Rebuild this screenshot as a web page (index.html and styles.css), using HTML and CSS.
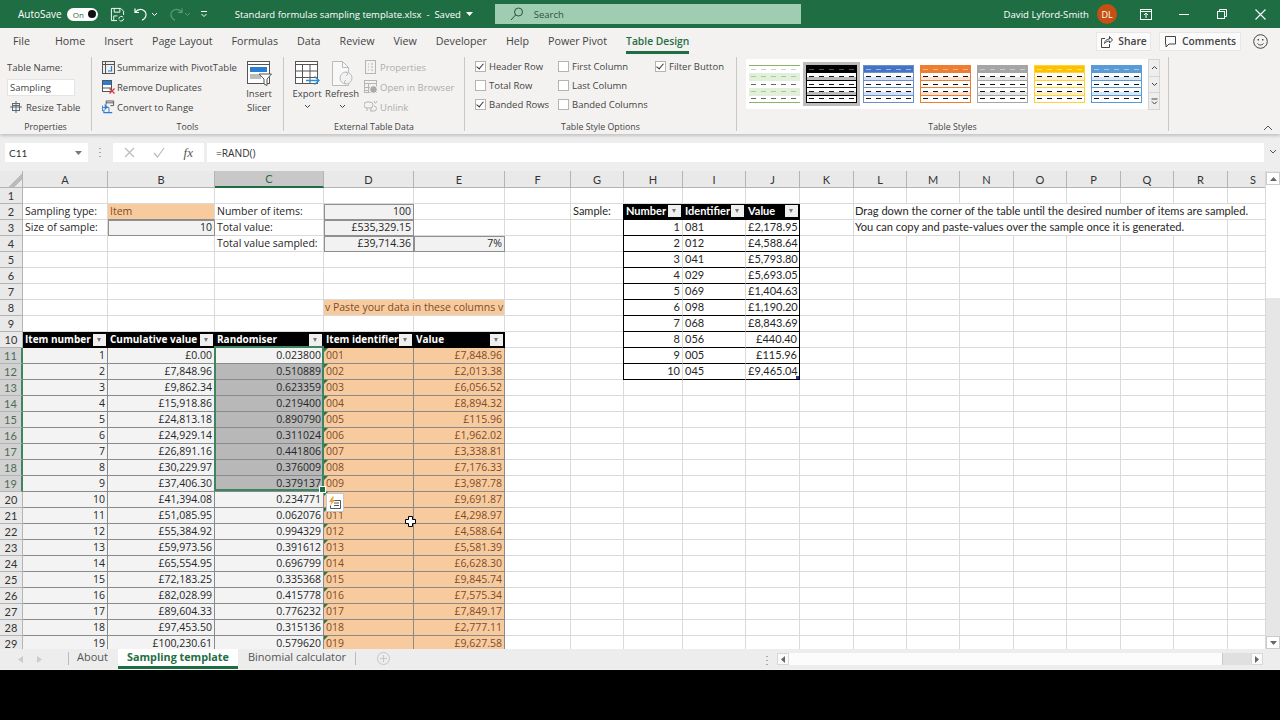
FILE: index.html
```html
<!DOCTYPE html>
<html lang="en">
<head>
  <meta charset="UTF-8" />
  <title>Standard formulas sampling template.xlsx - Excel</title>
  <link rel="stylesheet" href="styles.css">
</head>
<body>
<div class="app">

  <!-- title bar -->
  <header class="titlebar">
    <span class="autosave">AutoSave</span>
    <span class="toggle">On<i></i></span>
    <svg class="qa save" width="15" height="15" viewBox="0 0 16 16" fill="none" stroke="#fff" stroke-width="1"><path d="M1.500 1.500h10l3 3v4M1.500 1.500v13h6M4.500 1.500v4h6v-4M4 14.500v-5h4"/><path d="M9.500 12.500a2.500 2.500 0 0 1 4.500-1.500M14.500 12.500a2.500 2.500 0 0 1-4.500 1.500"/></svg>
    <svg class="qa undo" width="14" height="14" viewBox="0 0 14 14" fill="none" stroke="#fff" stroke-width="1.200"><path d="M1 1.500v4h4M1.200 5.300C3 3 5 2 7.500 2.500c3 .6 5 3.200 4.500 6-.3 1.800-2 3.800-4 4.800"/></svg>
    <svg class="chev c-undo" width="7" height="5" viewBox="0 0 7 5" fill="none" stroke="#fff"><path d="M1 1l2.500 2.500L6 1"/></svg>
    <svg class="qa redo" width="14" height="14" viewBox="0 0 14 14" fill="none" stroke="#5f9b7b" stroke-width="1.200"><path d="M13 1.500v4H9M12.800 5.300C11 3 9 2 6.500 2.500c-3 .6-5 3.200-4.500 6 .3 1.800 2 3.800 4 4.800"/></svg>
    <svg class="chev c-redo" width="7" height="5" viewBox="0 0 7 5" fill="none" stroke="#5f9b7b"><path d="M1 1l2.500 2.500L6 1"/></svg>
    <svg class="custom" width="8" height="8" viewBox="0 0 8 8" fill="none" stroke="#fff"><path d="M1 1.500h6M1.500 4l2.500 2.500L6.500 4"/></svg>
    <span class="doc">Standard formulas sampling template.xlsx&nbsp; - &nbsp;Saved</span>
    <svg class="chev doc-chev" width="7" height="4" viewBox="0 0 7 4"><path d="M0 0h7L3.500 4z" fill="#fff"/></svg>
    <div class="search">
      <svg width="14" height="14" viewBox="0 0 14 14" fill="none" stroke="#2f4f3e" stroke-width="1"><circle cx="8.500" cy="5" r="4"/><path d="M5.500 8L1 13"/></svg>
      <span>Search</span>
    </div>
    <span class="user">David Lyford-Smith</span>
    <span class="avatar">DL</span>
    <svg class="win w1" width="12" height="11" viewBox="0 0 12 11" fill="none" stroke="#fff"><rect x=".5" y=".5" width="11" height="10"/><path d="M.5 2.500h11"/><path d="M6 9V4M4 6l2-2 2 2"/></svg>
    <svg class="win w2" width="10" height="10" viewBox="0 0 10 10" stroke="#fff"><path d="M0 5.500h10"/></svg>
    <svg class="win w3" width="10" height="10" viewBox="0 0 10 10" fill="none" stroke="#fff"><path d="M2.500 2.500V.5h7v7h-2"/><rect x=".5" y="2.500" width="7" height="7"/></svg>
    <svg class="win w4" width="11" height="11" viewBox="0 0 11 11" stroke="#fff" stroke-width="1.100"><path d="M.5.500l10 10M10.500.500l-10 10"/></svg>
  </header>

  <!-- ribbon tabs -->
  <nav class="tabs">
    <span class="tab file">File</span>
    <span class="tab">Home</span>
    <span class="tab">Insert</span>
    <span class="tab">Page Layout</span>
    <span class="tab">Formulas</span>
    <span class="tab">Data</span>
    <span class="tab">Review</span>
    <span class="tab">View</span>
    <span class="tab">Developer</span>
    <span class="tab">Help</span>
    <span class="tab">Power Pivot</span>
    <span class="tab active">Table Design</span>
    <span class="tab-btn share">
      <svg width="13" height="13" viewBox="0 0 13 13" fill="none" stroke="#444"><path d="M5 3.500H1.500v9h8V9"/><path d="M4.500 8.500c.3-3 2.500-4.500 5-4.500V1.500l3 3.500-3 3V6c-2 0-3.500.800-5 2.500z"/></svg>
      Share
    </span>
    <span class="tab-btn comments">
      <svg width="13" height="13" viewBox="0 0 13 13" fill="none" stroke="#444"><path d="M1.500 1.500h10v7.500h-6.500l-3 3v-3h-.5z"/></svg>
      Comments
    </span>
    <svg class="smiley" width="15" height="15" viewBox="0 0 15 15" fill="none" stroke="#444"><circle cx="7.500" cy="7.500" r="6.800"/><path d="M4.500 9.500c1.500 2 4.500 2 6 0"/><path d="M5.300 5v1.500M9.700 5v1.500" stroke-width="1.400"/></svg>
  </nav>

  <!-- ribbon -->
  <section class="ribbon">
    <div class="group g-props">
      <div class="body stack indent">
        <div class="line">Table Name:</div>
        <div class="line"><span class="tname">Sampling</span></div>
        <div class="line resize">
          <svg width="12" height="12" viewBox="0 0 12 12" fill="none" stroke="#5a6a72"><rect x="2.500" y="2.500" width="7" height="7"/><path d="M6 0v12M0 6h12M2.500 4.500h7"/></svg>
          Resize Table
        </div>
      </div>
      <div class="label">Properties</div>
    </div>

    <div class="group g-tools">
      <div class="body row">
        <div class="stack">
          <div class="line ico">
            <svg width="13" height="13" viewBox="0 0 13 13" fill="none"><rect x=".5" y=".5" width="12" height="12" fill="#eee" stroke="#555"/><path d="M.5 3.500h12M3.500.5v12" stroke="#555"/><path d="M9.500 5v5H6" stroke="#2b7cd3" stroke-width="1.200"/></svg>
            Summarize with PivotTable
          </div>
          <div class="line ico">
            <svg width="13" height="14" viewBox="0 0 13 14" fill="none"><rect x=".5" y=".5" width="9" height="11" fill="#fff" stroke="#555"/><rect x="1" y="1" width="8" height="4" fill="#2b7cd3"/><path d="M.5 8h9" stroke="#555"/><path d="M7.500 8.500l5 5M12.500 8.500l-5 5" stroke="#d9363e" stroke-width="1.300"/></svg>
            Remove Duplicates
          </div>
          <div class="line ico">
            <svg width="14" height="14" viewBox="0 0 14 14" fill="none"><path d="M4.500 4.500v-4h8v5H9" stroke="#555"/><path d="M4.500 2.500h8" stroke="#555"/><path d="M.5 7.500h7v5" stroke="#2b7cd3"/><path d="M5.500 7l-2-2v4zM2 10v3h9" stroke="#2b7cd3" stroke-width="1.200"/><path d="M.5 5.500v6" stroke="#2b7cd3"/></svg>
            Convert to Range
          </div>
        </div>
        <div class="big slicer">
          <svg width="25" height="25" viewBox="0 0 25 25" fill="none"><rect x=".5" y=".5" width="22" height="22" fill="#fff" stroke="#555"/><path d="M.5 3.500h22" stroke="#555"/><rect x="3" y="6" width="17" height="5" fill="#2b7cd3"/><rect x="3" y="13" width="11" height="5" fill="#bbb"/><path d="M12 13h12.500l-4.500 5v6.500l-3-1.500v-5z" fill="#fff" stroke="#555"/></svg>
          <span>Insert<br>Slicer</span>
        </div>
      </div>
      <div class="label">Tools</div>
    </div>

    <div class="group g-ext">
      <div class="body row">
        <div class="big export">
          <svg width="25" height="25" viewBox="0 0 25 25" fill="none" stroke="#555"><rect x=".5" y=".5" width="22" height="22" fill="#fff"/><path d="M.5 3.500h22M.5 10h22M.5 16.500h22M7.500 3.500v19M15 3.500v19"/><path d="M11 19.500h13M19.500 15.500l4.500 4-4.500 4" stroke="#2b8fd3" stroke-width="1.300"/></svg>
          <span>Export</span>
          <svg class="mini" width="7" height="5" viewBox="0 0 7 5" fill="none" stroke="#444"><path d="M1 1l2.500 2.500L6 1"/></svg>
        </div>
        <div class="big refresh">
          <svg width="23" height="25" viewBox="0 0 23 25" fill="none" stroke="#bbb"><path d="M1.500.5h10l6 6v18h-16z" fill="#f8f8f8"/><path d="M11.500.5v6h6"/><circle cx="15" cy="17" r="6" fill="#f3f2f1"/><path d="M15 11l2 2-2 2M15 23l-2-2 2-2"/></svg>
          <span>Refresh</span>
          <svg class="mini" width="7" height="5" viewBox="0 0 7 5" fill="none" stroke="#444"><path d="M1 1l2.500 2.500L6 1"/></svg>
        </div>
        <div class="stack off">
          <div class="line ico">
            <svg width="14" height="14" viewBox="0 0 12 14" fill="none" stroke="#b5b5b5"><rect x=".5" y=".5" width="10" height="13"/><path d="M3 4h1M3 7h1M3 10h1M6 4h2M6 7h2M6 10h2"/></svg>
            Properties
          </div>
          <div class="line ico">
            <svg width="14" height="14" viewBox="0 0 14 14" fill="none" stroke="#b5b5b5"><rect x=".5" y=".5" width="12" height="12"/><path d="M.5 3.500h12M4.500 3.500v9M.5 7.500h6M.5 10.500h4"/><circle cx="9.500" cy="9.500" r="3.800" fill="#aaa" stroke="#f3f2f1"/></svg>
            Open in Browser
          </div>
          <div class="line ico">
            <svg width="14" height="14" viewBox="0 0 14 14" fill="none" stroke="#b5b5b5"><path d="M3 11V8M7 11V8"/><path d="M4 8H3a3 3 0 0 1 0-6h3a3 3 0 0 1 3 3 3 3 0 0 1-3 3z"/><path d="M10 6a2.500 2.500 0 0 1 0 5H6M10 1l1 2M13 1l-1.500 2.500"/></svg>
            Unlink
          </div>
        </div>
      </div>
      <div class="label">External Table Data</div>
    </div>

    <div class="group g-opts">
      <div class="body row">
        <div class="opt-col c1">
          <div class="opt"><i class="box on"></i>Header Row</div>
          <div class="opt"><i class="box"></i>Total Row</div>
          <div class="opt"><i class="box on"></i>Banded Rows</div>
        </div>
        <div class="opt-col c2">
          <div class="opt"><i class="box"></i>First Column</div>
          <div class="opt"><i class="box"></i>Last Column</div>
          <div class="opt"><i class="box"></i>Banded Columns</div>
        </div>
        <div class="opt-col c3">
          <div class="opt"><i class="box on"></i>Filter Button</div>
        </div>
      </div>
      <div class="label">Table Style Options</div>
    </div>

    <div class="group g-styles">
      <div class="body row">
        <div class="gallery">
          <div class="thumb green"><i></i><i></i><i></i><i></i><i></i></div>
          <div class="frame"><div class="thumb black"><i></i><i></i><i></i><i></i><i></i></div></div>
          <div class="thumb blue"><i></i><i></i><i></i><i></i><i></i></div>
          <div class="thumb orange"><i></i><i></i><i></i><i></i><i></i></div>
          <div class="thumb grey"><i></i><i></i><i></i><i></i><i></i></div>
          <div class="thumb gold"><i></i><i></i><i></i><i></i><i></i></div>
          <div class="thumb sky"><i></i><i></i><i></i><i></i><i></i></div>
        </div>
        <div class="gallery-btns">
          <span><svg width="7" height="5" viewBox="0 0 7 5" fill="none" stroke="#444"><path d="M1 4l2.500-2.500L6 4"/></svg></span>
          <span><svg width="7" height="5" viewBox="0 0 7 5" fill="none" stroke="#444"><path d="M1 1l2.500 2.500L6 1"/></svg></span>
          <span><svg width="7" height="7" viewBox="0 0 7 7" fill="none" stroke="#444"><path d="M.5 1h6M1 3.500l2.500 2.500L6 3.500"/></svg></span>
        </div>
      </div>
      <div class="label">Table Styles</div>
    </div>

    <svg class="collapse" width="10" height="6" viewBox="0 0 10 6" fill="none" stroke="#555"><path d="M1 5l4-4 4 4"/></svg>
  </section>

  <!-- formula bar -->
  <div class="formula-bar">
    <div class="namebox">C11<svg width="7" height="4" viewBox="0 0 7 4"><path d="M0 0h7L3.500 4z" fill="#777"/></svg></div>
    <span class="dots"></span>
    <div class="fx-box">
      <svg width="11" height="11" viewBox="0 0 11 11" stroke="#bbb" stroke-width="1.200"><path d="M1 1l9 9M10 1l-9 9"/></svg>
      <svg width="12" height="11" viewBox="0 0 12 11" fill="none" stroke="#bbb" stroke-width="1.200"><path d="M1 6l3.500 4L11 1"/></svg>
      <span class="fx">fx</span>
    </div>
    <div class="formula">=RAND()</div>
    <svg class="fexpand" width="8" height="5" viewBox="0 0 8 5" fill="none" stroke="#555"><path d="M1 1l3 3 3-3"/></svg>
  </div>

  <!-- sheet -->
  <div class="sheet">
    <div class="grid">
      <table class="cells">
        <colgroup>
          <col class="w23"><col class="w85"><col class="w107"><col class="w109"><col class="w90"><col class="w91"><col class="w66">
          <col class="w53"><col class="w59"><col class="w63"><col class="w54"><col class="w54"><col class="w53"><col class="w53">
          <col class="w54"><col class="w53"><col class="w54"><col class="w53"><col class="w54"><col class="w51">
        </colgroup>
        <tr><th class="corner"></th><th class="ch">A</th><th class="ch">B</th><th class="ch sel-ch">C</th><th class="ch">D</th><th class="ch">E</th><th class="ch">F</th><th class="ch">G</th><th class="ch">H</th><th class="ch">I</th><th class="ch">J</th><th class="ch">K</th><th class="ch">L</th><th class="ch">M</th><th class="ch">N</th><th class="ch">O</th><th class="ch">P</th><th class="ch">Q</th><th class="ch">R</th><th class="ch">S</th></tr>
        <tr><th class="rh">1</th><td></td><td></td><td></td><td></td><td></td><td></td><td></td><td></td><td></td><td></td><td></td><td></td><td></td><td></td><td></td><td></td><td></td><td></td><td></td></tr>
        <tr><th class="rh">2</th><td>Sampling type:</td><td class="o">Item</td><td>Number of items:</td><td class="n in">100</td><td></td><td></td><td class="cal">Sample:</td><td class="hd cal sa"><span class="hw">Number<i class="fb"></i></span></td><td class="hd cal"><span class="hw">Identifier<i class="fb"></i></span></td><td class="hd cal lastc"><span class="hw">Value<i class="fb"></i></span></td><td></td><td class="cal note" colspan="8">Drag down the corner of the table until the desired number of items are sampled.</td></tr>
        <tr><th class="rh">3</th><td>Size of sample:</td><td class="n in">10</td><td>Total value:</td><td class="n in">£535,329.15</td><td></td><td></td><td></td><td class="n cal sa">1</td><td class="cal sb">081</td><td class="n cal sc">£2,178.95</td><td></td><td class="cal note" colspan="7">You can copy and paste-values over the sample once it is generated.</td><td></td></tr>
        <tr><th class="rh">4</th><td></td><td></td><td>Total value sampled:</td><td class="n in">£39,714.36</td><td class="n in">7%</td><td></td><td></td><td class="n cal sa">2</td><td class="cal sb">012</td><td class="n cal sc">£4,588.64</td><td></td><td></td><td></td><td></td><td></td><td></td><td></td><td></td><td></td></tr>
        <tr><th class="rh">5</th><td></td><td></td><td></td><td></td><td></td><td></td><td></td><td class="n cal sa">3</td><td class="cal sb">041</td><td class="n cal sc">£5,793.80</td><td></td><td></td><td></td><td></td><td></td><td></td><td></td><td></td><td></td></tr>
        <tr><th class="rh">6</th><td></td><td></td><td></td><td></td><td></td><td></td><td></td><td class="n cal sa">4</td><td class="cal sb">029</td><td class="n cal sc">£5,693.05</td><td></td><td></td><td></td><td></td><td></td><td></td><td></td><td></td><td></td></tr>
        <tr><th class="rh">7</th><td></td><td></td><td></td><td></td><td></td><td></td><td></td><td class="n cal sa">5</td><td class="cal sb">069</td><td class="n cal sc">£1,404.63</td><td></td><td></td><td></td><td></td><td></td><td></td><td></td><td></td><td></td></tr>
        <tr><th class="rh">8</th><td></td><td></td><td></td><td class="o paste" colspan="2">v Paste your data in these columns v</td><td></td><td></td><td class="n cal sa">6</td><td class="cal sb">098</td><td class="n cal sc">£1,190.20</td><td></td><td></td><td></td><td></td><td></td><td></td><td></td><td></td><td></td></tr>
        <tr><th class="rh">9</th><td></td><td></td><td></td><td></td><td></td><td></td><td></td><td class="n cal sa">7</td><td class="cal sb">068</td><td class="n cal sc">£8,843.69</td><td></td><td></td><td></td><td></td><td></td><td></td><td></td><td></td><td></td></tr>
        <tr><th class="rh">10</th><td class="hd"><span class="hw">Item number<i class="fb"></i></span></td><td class="hd"><span class="hw">Cumulative value<i class="fb"></i></span></td><td class="hd"><span class="hw">Randomiser<i class="fb"></i></span></td><td class="hd"><span class="hw">Item identifier<i class="fb"></i></span></td><td class="hd"><span class="hw">Value<i class="fb"></i></span></td><td></td><td></td><td class="n cal sa">8</td><td class="cal sb">056</td><td class="n cal sc">£440.40</td><td></td><td></td><td></td><td></td><td></td><td></td><td></td><td></td><td></td></tr>
        <tr><th class="rh on">11</th><td class="n t">1</td><td class="n t">£0.00</td><td class="n t">0.023800</td><td class="o e">001</td><td class="n o v">£7,848.96</td><td></td><td></td><td class="n cal sa">9</td><td class="cal sb">005</td><td class="n cal sc">£115.96</td><td></td><td></td><td></td><td></td><td></td><td></td><td></td><td></td><td></td></tr>
        <tr><th class="rh on">12</th><td class="n t">2</td><td class="n t">£7,848.96</td><td class="n sel">0.510889</td><td class="o e">002</td><td class="n o v">£2,013.38</td><td></td><td></td><td class="n cal sa">10</td><td class="cal sb">045</td><td class="n cal sc grip">£9,465.04</td><td></td><td></td><td></td><td></td><td></td><td></td><td></td><td></td><td></td></tr>
        <tr><th class="rh on">13</th><td class="n t">3</td><td class="n t">£9,862.34</td><td class="n sel">0.623359</td><td class="o e">003</td><td class="n o v">£6,056.52</td><td></td><td></td><td></td><td></td><td></td><td></td><td></td><td></td><td></td><td></td><td></td><td></td><td></td><td></td></tr>
        <tr><th class="rh on">14</th><td class="n t">4</td><td class="n t">£15,918.86</td><td class="n sel">0.219400</td><td class="o e">004</td><td class="n o v">£8,894.32</td><td></td><td></td><td></td><td></td><td></td><td></td><td></td><td></td><td></td><td></td><td></td><td></td><td></td><td></td></tr>
        <tr><th class="rh on">15</th><td class="n t">5</td><td class="n t">£24,813.18</td><td class="n sel">0.890790</td><td class="o e">005</td><td class="n o v">£115.96</td><td></td><td></td><td></td><td></td><td></td><td></td><td></td><td></td><td></td><td></td><td></td><td></td><td></td><td></td></tr>
        <tr><th class="rh on">16</th><td class="n t">6</td><td class="n t">£24,929.14</td><td class="n sel">0.311024</td><td class="o e">006</td><td class="n o v">£1,962.02</td><td></td><td></td><td></td><td></td><td></td><td></td><td></td><td></td><td></td><td></td><td></td><td></td><td></td><td></td></tr>
        <tr><th class="rh on">17</th><td class="n t">7</td><td class="n t">£26,891.16</td><td class="n sel">0.441806</td><td class="o e">007</td><td class="n o v">£3,338.81</td><td></td><td></td><td></td><td></td><td></td><td></td><td></td><td></td><td></td><td></td><td></td><td></td><td></td><td></td></tr>
        <tr><th class="rh on">18</th><td class="n t">8</td><td class="n t">£30,229.97</td><td class="n sel">0.376009</td><td class="o e">008</td><td class="n o v">£7,176.33</td><td></td><td></td><td></td><td></td><td></td><td></td><td></td><td></td><td></td><td></td><td></td><td></td><td></td><td></td></tr>
        <tr><th class="rh on">19</th><td class="n t">9</td><td class="n t">£37,406.30</td><td class="n sel">0.379137</td><td class="o e">009</td><td class="n o v">£3,987.78</td><td></td><td></td><td></td><td></td><td></td><td></td><td></td><td></td><td></td><td></td><td></td><td></td><td></td><td></td></tr>
        <tr><th class="rh">20</th><td class="n t">10</td><td class="n t">£41,394.08</td><td class="n t">0.234771</td><td class="o e">010</td><td class="n o v">£9,691.87</td><td></td><td></td><td></td><td></td><td></td><td></td><td></td><td></td><td></td><td></td><td></td><td></td><td></td><td></td></tr>
        <tr><th class="rh">21</th><td class="n t">11</td><td class="n t">£51,085.95</td><td class="n t">0.062076</td><td class="o e">011</td><td class="n o v">£4,298.97</td><td></td><td></td><td></td><td></td><td></td><td></td><td></td><td></td><td></td><td></td><td></td><td></td><td></td><td></td></tr>
        <tr><th class="rh">22</th><td class="n t">12</td><td class="n t">£55,384.92</td><td class="n t">0.994329</td><td class="o e">012</td><td class="n o v">£4,588.64</td><td></td><td></td><td></td><td></td><td></td><td></td><td></td><td></td><td></td><td></td><td></td><td></td><td></td><td></td></tr>
        <tr><th class="rh">23</th><td class="n t">13</td><td class="n t">£59,973.56</td><td class="n t">0.391612</td><td class="o e">013</td><td class="n o v">£5,581.39</td><td></td><td></td><td></td><td></td><td></td><td></td><td></td><td></td><td></td><td></td><td></td><td></td><td></td><td></td></tr>
        <tr><th class="rh">24</th><td class="n t">14</td><td class="n t">£65,554.95</td><td class="n t">0.696799</td><td class="o e">014</td><td class="n o v">£6,628.30</td><td></td><td></td><td></td><td></td><td></td><td></td><td></td><td></td><td></td><td></td><td></td><td></td><td></td><td></td></tr>
        <tr><th class="rh">25</th><td class="n t">15</td><td class="n t">£72,183.25</td><td class="n t">0.335368</td><td class="o e">015</td><td class="n o v">£9,845.74</td><td></td><td></td><td></td><td></td><td></td><td></td><td></td><td></td><td></td><td></td><td></td><td></td><td></td><td></td></tr>
        <tr><th class="rh">26</th><td class="n t">16</td><td class="n t">£82,028.99</td><td class="n t">0.415778</td><td class="o e">016</td><td class="n o v">£7,575.34</td><td></td><td></td><td></td><td></td><td></td><td></td><td></td><td></td><td></td><td></td><td></td><td></td><td></td><td></td></tr>
        <tr><th class="rh">27</th><td class="n t">17</td><td class="n t">£89,604.33</td><td class="n t">0.776232</td><td class="o e">017</td><td class="n o v">£7,849.17</td><td></td><td></td><td></td><td></td><td></td><td></td><td></td><td></td><td></td><td></td><td></td><td></td><td></td><td></td></tr>
        <tr><th class="rh">28</th><td class="n t">18</td><td class="n t">£97,453.50</td><td class="n t">0.315136</td><td class="o e">018</td><td class="n o v">£2,777.11</td><td></td><td></td><td></td><td></td><td></td><td></td><td></td><td></td><td></td><td></td><td></td><td></td><td></td><td></td></tr>
        <tr><th class="rh">29</th><td class="n t">19</td><td class="n t">£100,230.61</td><td class="n t">0.579620</td><td class="o e">019</td><td class="n o v">£9,627.58</td><td></td><td></td><td></td><td></td><td></td><td></td><td></td><td></td><td></td><td></td><td></td><td></td><td></td><td></td></tr>
      </table>

      <!-- things floating over the cells -->
      <div class="selection"><i></i></div>
      <div class="autofill">
        <svg width="14" height="14" viewBox="0 0 14 14" fill="none"><path d="M4 4.500h8.500v8H2.500v-3" stroke="#555"/><path d="M6 7h5M6 9.500h5" stroke="#555"/><path d="M4.500.5L1 6h2.500L2 10l5-6H4.500L6 .5z" fill="#e8a33d"/></svg>
      </div>
      <svg class="cursor" width="11" height="11" viewBox="0 0 11 11"><path d="M3.500.5h4v3h3v4h-3v3h-4v-3h-3v-4h3z" fill="#fff" stroke="#000"/></svg>
    </div>

    <div class="vscroll">
      <span class="sb-btn"><svg width="7" height="4" viewBox="0 0 7 4"><path d="M3.500 0L7 4H0z" fill="#666"/></svg></span>
      <span class="vthumb"></span>
      <span class="sb-btn down"><svg width="7" height="4" viewBox="0 0 7 4"><path d="M0 0h7L3.500 4z" fill="#666"/></svg></span>
    </div>
  </div>

  <!-- sheet tabs -->
  <footer class="sheetbar">
    <svg class="nav" width="5" height="7" viewBox="0 0 5 7"><path d="M5 0v7L0 3.500z" fill="#ccc"/></svg>
    <svg class="nav n2" width="5" height="7" viewBox="0 0 5 7"><path d="M0 0v7l5-3.500z" fill="#ccc"/></svg>
    <span class="sheet-tab first">About</span>
    <span class="sheet-tab current">Sampling template</span>
    <span class="sheet-tab last">Binomial calculator</span>
    <svg class="add" width="13" height="13" viewBox="0 0 13 13" fill="none" stroke="#c6c6c6"><circle cx="6.500" cy="6.500" r="6"/><path d="M6.500 3v7M3 6.500h7"/></svg>
    <span class="hdots"></span>
    <div class="hscroll">
      <span class="hb"><svg width="4" height="7" viewBox="0 0 4 7"><path d="M4 0v7L0 3.500z" fill="#666"/></svg></span>
      <span class="hthumb"></span>
      <span class="hgap"></span>
      <span class="hb"><svg width="4" height="7" viewBox="0 0 4 7"><path d="M0 0v7l4-3.500z" fill="#666"/></svg></span>
    </div>
  </footer>

</div>
</body>
</html>
```

FILE: styles.css
```css
html, body {
  margin: 0;
  height: 720px;
  overflow: hidden;
  background: #000;
}

.app {
  width: 1280px;
  height: 670px;
  display: flex;
  flex-direction: column;
  font-family: "Open Sans", sans-serif;
  font-size: 9.5px;
  color: #444;
  background: #f3f2f1;
}

svg { flex: none; }

/* title bar */
.titlebar {
  flex: none;
  height: 28px;
  display: flex;
  align-items: center;
  padding-left: 18px;
  background: #1f6e43;
  color: #fff;
  font-size: 10px;
}

.toggle {
  width: 31px;
  height: 13px;
  margin-left: 5px;
  padding-left: 6px;
  box-sizing: border-box;
  display: flex;
  align-items: center;
  justify-content: space-between;
  background: #fff;
  border-radius: 7px;
  color: #1f6e43;
  font-size: 8px;
}

.toggle i {
  width: 8px;
  height: 8px;
  margin-right: 2px;
  background: #111;
  border-radius: 50%;
}

.save { margin-left: 12px; }
.undo { margin-left: 9px; }
.c-undo { margin-left: 3px; }
.redo { margin-left: 11px; }
.c-redo { margin-left: 1px; }
.custom { margin-left: 9px; }
.doc { margin-left: 27px; white-space: nowrap; font-size: 9.5px; }
.doc-chev { margin-left: 5px; }

.search {
  flex: none;
  width: 306px;
  height: 20px;
  margin-left: 22px;
  padding-left: 15px;
  box-sizing: border-box;
  display: flex;
  align-items: center;
  gap: 10px;
  background: #9fcdb1;
  color: #33523f;
  font-size: 9.5px;
}

.user { margin-left: auto; white-space: nowrap; font-size: 9.6px; }

.avatar {
  flex: none;
  width: 20px;
  height: 20px;
  margin-left: 8px;
  display: flex;
  align-items: center;
  justify-content: center;
  background: #c64f12;
  border-radius: 50%;
  font-size: 9px;
}

.w1 { margin-left: 23px; }
.w2 { margin-left: 27px; }
.w3 { margin-left: 28px; }
.w4 { margin-left: 28px; margin-right: 14px; }

/* ribbon tabs */
.tabs {
  flex: none;
  height: 27px;
  padding: 0 0 1px 13px;
  box-sizing: border-box;
  display: flex;
  align-items: center;
  font-size: 10.7px;
  gap: 19px;
}

.tab { position: relative; white-space: nowrap; }
.tab.file { margin-right: 6px; }

.tab.active {
  color: #1f6e43;
  font-weight: 600;
  font-size: 10.3px;
}

.tab.active::after {
  content: "";
  position: absolute;
  left: 0;
  right: 0;
  bottom: -6px;
  height: 3px;
  background: #1f6e43;
}

.tab-btn {
  height: 19px;
  display: flex;
  align-items: center;
  justify-content: center;
  gap: 5px;
  background: #fbfbfb;
  border: 1px solid #e8e7e6;
  box-sizing: border-box;
  font-size: 10.3px;
  font-weight: 600;
}

.share { width: 55px; margin-left: auto; }
.comments { width: 82px; margin-left: -11px; }
.smiley { margin: 0 12px 0 -7px; }

/* ribbon */
.ribbon {
  flex: none;
  height: 79px;
  display: flex;
  padding-top: 2px;
  box-sizing: border-box;
  position: relative;
  box-shadow: 0 2px 3px rgba(0, 0, 0, 0.18);
  z-index: 1;
}

.group {
  flex: none;
  height: 74px;
  display: flex;
  flex-direction: column;
  border-right: 1px solid #c9c8c7;
  box-sizing: border-box;
}

.g-props { width: 92px; }
.g-tools { width: 192px; }
.g-ext { width: 181px; }
.g-opts { width: 272px; }
.g-styles { width: 432px; }

.body { height: 62px; flex: none; }
.row { display: flex; }
.stack { display: flex; flex-direction: column; }
.indent { padding-left: 7px; }

.line {
  height: 20px;
  display: flex;
  align-items: center;
  white-space: nowrap;
}

.label {
  height: 14px;
  line-height: 14px;
  margin-top: 1px;
  text-align: center;
  font-size: 8.8px;
}

.tname {
  width: 68px;
  height: 17px;
  line-height: 15px;
  padding-left: 2px;
  box-sizing: border-box;
  background: #fff;
  border: 1px solid #e4e4e4;
}

.resize { gap: 4px; padding-left: 3px; }

.ico { gap: 2px; }
.g-tools .stack { padding-left: 10px; width: 146px; flex: none; box-sizing: border-box; }
.g-tools .line svg { width: 13px; }

.big {
  display: flex;
  flex-direction: column;
  align-items: center;
  text-align: center;
  line-height: 14px;
  padding-top: 4px;
  flex: none;
}

.big > span { margin-top: 1px; }
.slicer { width: 34px; margin-left: 4px; }
.export { width: 40px; margin-left: 3px; }
.refresh { width: 38px; margin-left: -4px; }
.mini { margin-top: 3px; }
.off { margin-left: 3px; color: #adadad; }

.opt-col {
  flex: none;
  display: flex;
  flex-direction: column;
}

.opt {
  height: 19px;
  display: flex;
  align-items: center;
  gap: 3px;
  white-space: nowrap;
}

.c1 { width: 83px; margin-left: 10px; }
.c2 { width: 97px; }

.box {
  width: 9px;
  height: 9px;
  background: #fff;
  border: 1px solid #b4b4b4;
  position: relative;
}

.box.on::after {
  content: "";
  position: absolute;
  left: 2px;
  top: 0;
  width: 3px;
  height: 6px;
  border: solid #333;
  border-width: 0 1px 1px 0;
  transform: rotate(40deg);
}

/* table style gallery */
.gallery {
  flex: none;
  width: 402px;
  height: 50px;
  margin: 2px 0 0 9px;
  padding: 0 4px 0 3px;
  box-sizing: border-box;
  display: flex;
  align-items: center;
  gap: 6px;
  background: #fff;
}

.frame {
  flex: none;
  padding: 3px;
  margin: 0 -3px;
  background: #bdbdbd;
}

.thumb {
  --head: #777;
  --head-dash: #ccc;
  --line: #777;
  --band: #ddd;
  flex: none;
  width: 51px;
  height: 38px;
  box-sizing: border-box;
  display: flex;
  flex-direction: column;
  background: #fff;
  border: 1px solid var(--line);
}

.thumb i {
  flex: 1;
  display: block;
  border-bottom: 1px solid var(--line);
  background:
    repeating-linear-gradient(90deg, transparent 0 2px, #111 2px 7px, transparent 7px 10px) center / 100% 1px no-repeat;
}

.thumb i:last-child { border-bottom: 0; }

.thumb i:first-child {
  background:
    repeating-linear-gradient(90deg, transparent 0 2px, var(--head-dash) 2px 7px, transparent 7px 10px) center / 100% 1px no-repeat,
    var(--head);
}

.thumb i:nth-child(2), .thumb i:nth-child(4) {
  background:
    repeating-linear-gradient(90deg, transparent 0 2px, #111 2px 7px, transparent 7px 10px) center / 100% 1px no-repeat,
    linear-gradient(#fff 60%, var(--band) 60%);
}

.green {
  --head: #fff;
  --head-dash: #ccc;
  --line: transparent;
  border: 0;
  border-top: 1px solid #8db36b;
  border-bottom: 1px solid #8db36b;
}

.green i:nth-child(2), .green i:nth-child(4) {
  background:
    repeating-linear-gradient(90deg, transparent 0 2px, #a9c99a 2px 7px, transparent 7px 10px) center / 100% 1px no-repeat,
    #e2efda;
}

.green i:nth-child(3), .green i:last-child {
  background:
    repeating-linear-gradient(90deg, transparent 0 2px, #666 2px 7px, transparent 7px 10px) center / 100% 1px no-repeat;
}

.black { --head: #000; --head-dash: #555; --line: #000; --band: #bbb; }
.blue { --head: #4472c4; --head-dash: #9db7e6; --line: #6f8fc9; --band: #d3dff3; }
.orange { --head: #ed7d31; --head-dash: #f6b58a; --line: #ed7d31; --band: #fbe0cf; }
.grey { --head: #a5a5a5; --head-dash: #cdcdcd; --line: #a5a5a5; --band: #e4e4e4; }
.gold { --head: #ffc000; --head-dash: #ffdf80; --line: #ffd335; --band: #fff0c8; }
.sky { --head: #5b9bd5; --head-dash: #a5c9ea; --line: #5b9bd5; --band: #d8e7f5; }

.gallery-btns {
  flex: none;
  width: 12px;
  height: 50px;
  margin-top: 2px;
  display: flex;
  flex-direction: column;
  background: #eee;
}

.gallery-btns span {
  flex: 1;
  display: flex;
  align-items: center;
  justify-content: center;
  border: 1px solid #d5d5d5;
  margin-bottom: -1px;
}

.collapse {
  position: absolute;
  left: 1263px;
  top: 70px;
}

/* formula bar */
.formula-bar {
  flex: none;
  height: 37px;
  padding: 9px 5px 9px;
  box-sizing: border-box;
  display: flex;
  background: #eeeeee;
  font-size: 10px;
  font-family: "Lato", sans-serif;
}

.namebox {
  flex: none;
  width: 83px;
  padding: 0 6px 0 4px;
  box-sizing: border-box;
  display: flex;
  align-items: center;
  justify-content: space-between;
  background: #fff;
  color: #333;
}

.dots {
  flex: none;
  width: 2px;
  height: 9px;
  margin: 5px 12px 0 11px;
  background: repeating-linear-gradient(#aaa 0 1px, transparent 1px 4px);
}

.fx-box {
  flex: none;
  width: 91px;
  padding: 0 11px;
  box-sizing: border-box;
  display: flex;
  align-items: center;
  justify-content: space-between;
  background: #fff;
}

.fx {
  font-family: "Liberation Serif", serif;
  font-style: italic;
  font-size: 13px;
  color: #555;
}

.formula {
  flex: none;
  width: 1057px;
  margin-left: 3px;
  padding-left: 9px;
  box-sizing: border-box;
  display: flex;
  align-items: center;
  background: #fff;
  color: #333;
  font-family: "Open Sans", sans-serif;
  font-size: 10.2px;
}

.fexpand { margin: 6px 0 0 5px; }

/* sheet grid */
.sheet {
  flex: none;
  height: 478px;
  display: flex;
  background: #fff;
}

.grid {
  position: relative;
  flex: none;
  width: 1265px;
  overflow: hidden;
}

.cells {
  width: 1279px;
  table-layout: fixed;
  border-collapse: separate;
  border-spacing: 0;
  font-size: 10.5px;
  color: #262626;
}

.w23 { width: 23px; }
.w51 { width: 51px; }
.w53 { width: 53px; }
.w54 { width: 54px; }
.w59 { width: 59px; }
.w63 { width: 63px; }
.w66 { width: 66px; }
.w85 { width: 85px; }
.w90 { width: 90px; }
.w91 { width: 91px; }
.w107 { width: 107px; }
.w109 { width: 109px; }

.cells th, .cells td {
  height: 16px;
  padding: 0 2px;
  box-sizing: border-box;
  white-space: nowrap;
  line-height: 15px;
  font-weight: normal;
  border-right: 1px solid #dadada;
  border-bottom: 1px solid #dadada;
}

.cells th.ch, .cells th.rh, .cells th.corner {
  padding: 0;
  background: #e9e9e9;
  border-color: #b4b4b4;
  text-align: center;
  font-family: "Lato", sans-serif;
  font-size: 11px;
  color: #333;
}

.cells th.corner {
  background:
    linear-gradient(135deg, transparent 0 65%, #bbb 65% 80%, #e9e9e9 80%), #e9e9e9;
}

.cells th.sel-ch {
  background: #c8c8c8;
  color: #2b6b48;
  border-bottom: 2px solid #1f6e43;
}

.cells th.rh.on {
  background: #d2d2d2;
  color: #4d6b5a;
  border-right: 2px solid #3d8560;
}

.n { text-align: right; }

.cells td.o {
  background: #f8cb9e;
  color: #7c4d2c;
  border-bottom-color: #8a8a8a;
}

.cells td.paste { border-bottom-color: #dadada; padding-left: 1px; }

.cells td.v { border-right-color: #8a8a8a; }
.cells td.e { position: relative; border-right-color: #8a8a8a; }

.cells td.e::before {
  content: "";
  position: absolute;
  left: 0;
  top: 0;
  border-top: 4px solid #1f7a43;
  border-right: 4px solid transparent;
}

.cells td.t {
  background: #f3f3f3;
  border-bottom-color: #8a8a8a;
  border-right-color: #8a8a8a;
}

.cells td.sel {
  background: #b8b8b8;
  border-bottom-color: #8a8a8a;
  border-right-color: #8a8a8a;
}

.cells td.in {
  background: #f2f2f2;
  outline: 1px solid #8f8f8f;
  outline-offset: -1px;
}

.cells td.hd {
  background: #000;
  color: #fff;
  font-weight: 700;
  font-size: 10px;
  border-color: #000;
}

.hw {
  display: flex;
  align-items: center;
  justify-content: space-between;
}

.fb {
  flex: none;
  width: 13px;
  height: 12px;
  position: relative;
  background: #efefef;
  margin-right: -1px;
}

.fb::after {
  content: "";
  position: absolute;
  left: 4px;
  top: 4px;
  border-top: 4px solid #777;
  border-left: 2.500px solid transparent;
  border-right: 2.500px solid transparent;
}

.cells td.cal {
  font-family: "Lato", sans-serif;
  font-size: 11px;
  vertical-align: top;
  line-height: 14px;
}

.cells td.note { font-size: 11.1px; padding-left: 1px; }

.cells td.sa {
  box-shadow: -1px 0 0 #000;
  border-bottom-color: #000;
}

.cells td.sb { border-bottom-color: #000; }

.cells td.sc {
  border-right-color: #000;
  border-bottom-color: #000;
}

.cells td.lastc { border-right-color: #000; }

.cells td.grip { position: relative; }

.cells td.grip::after {
  content: "";
  position: absolute;
  right: 0;
  bottom: 0;
  width: 3px;
  height: 3px;
  background: #1f3f8f;
}

.selection {
  position: absolute;
  left: 214px;
  top: 175px;
  width: 110px;
  height: 145px;
  box-sizing: border-box;
  border: 2px solid #3d8560;
}

.selection i {
  position: absolute;
  right: -4px;
  bottom: -4px;
  width: 5px;
  height: 5px;
  background: #1f6e43;
  border: 1px solid #fff;
}

.autofill {
  position: absolute;
  left: 326px;
  top: 322px;
  width: 18px;
  height: 19px;
  box-sizing: border-box;
  display: flex;
  align-items: center;
  justify-content: center;
  background: #fff;
  border: 1px solid #c8c8c8;
}

.cursor {
  position: absolute;
  left: 405px;
  top: 345px;
}

/* scrollbars */
.vscroll {
  flex: none;
  width: 15px;
  display: flex;
  flex-direction: column;
  align-items: center;
  background: #e6e6e6;
  border-left: 1px solid #d8d8d8;
  box-sizing: border-box;
}

.sb-btn {
  flex: none;
  width: 14px;
  height: 13px;
  margin-top: 1px;
  display: flex;
  align-items: center;
  justify-content: center;
  background: #fff;
  border: 1px solid #ccc;
  box-sizing: border-box;
}

.sb-btn.down { margin-top: auto; }

.vthumb {
  flex: none;
  width: 14px;
  height: 113px;
  background: #fff;
}

.sheetbar {
  flex: none;
  height: 20px;
  display: flex;
  align-items: flex-start;
  background: #ededed;
  font-size: 11px;
}

.nav { margin: 7px 0 0 18px; }
.n2 { margin-left: 14px; }

.sheet-tab {
  height: 20px;
  line-height: 16px;
  white-space: nowrap;
  color: #555;
  box-sizing: border-box;
}

.first {
  margin-left: 26px;
  padding: 0 10px 0 9px;
  background: linear-gradient(#bbb, #bbb) left 3px / 1px 13px no-repeat;
}

.current {
  width: 120px;
  text-align: center;
  background: #fff;
  color: #1f6e43;
  font-weight: 700;
  font-size: 10.8px;
  border-bottom: 3px solid #1f6e43;
}

.last {
  padding: 0 10px;
  background: linear-gradient(#bbb, #bbb) right 3px / 1px 13px no-repeat;
}

.add { margin: 3px 0 0 21px; }

.hdots {
  flex: none;
  width: 2px;
  height: 10px;
  margin: 7px 0 0 376px;
  background: repeating-linear-gradient(#aaa 0 1px, transparent 1px 4px);
}

.hscroll {
  flex: none;
  width: 486px;
  height: 12px;
  margin: 4px 0 0 9px;
  display: flex;
  background: #e0e0e0;
}

.hb {
  flex: none;
  width: 12px;
  display: flex;
  align-items: center;
  justify-content: center;
  background: #fafafa;
  border: 1px solid #d8d8d8;
  box-sizing: border-box;
}

.hthumb {
  flex: none;
  width: 434px;
  background: #fcfcfc;
  border-right: 1px solid #c8c8c8;
  box-sizing: border-box;
}

.hgap { flex: 1; }
```
